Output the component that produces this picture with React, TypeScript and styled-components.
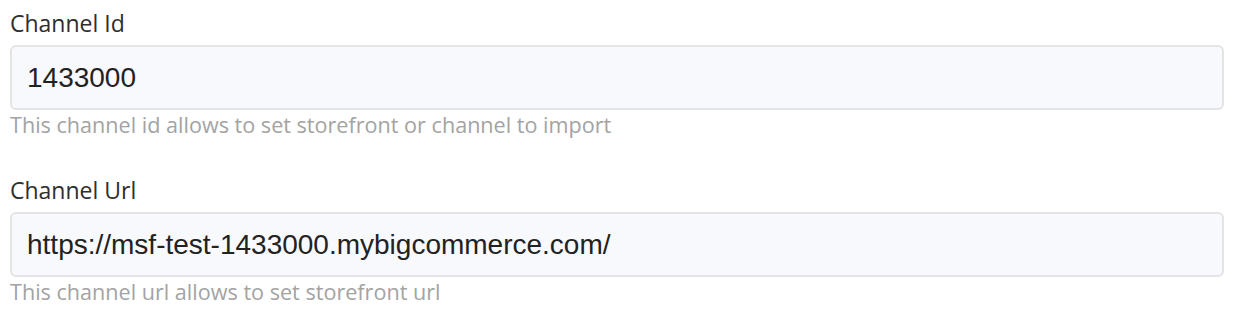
import React from "react";
import styled, { createGlobalStyle } from "styled-components";

const Global = createGlobalStyle`
  html, body {
    margin: 0;
    padding: 0;
    background: #ffffff;
  }
`;

const Page = styled.div`
  display: flex;
  flex-direction: column;
  gap: 35px;
  padding: 7px 14px 0 10px;
`;

const Field = styled.div`
  display: flex;
  flex-direction: column;
`;

const Label = styled.label`
  font-family: "Open Sans", "Noto Sans", sans-serif;
  font-size: 23px;
  font-weight: 500;
  line-height: 32px;
  color: #2e2e2e;
  margin-bottom: 6px;
`;

const Input = styled.input`
  box-sizing: border-box;
  width: 100%;
  height: 65px;
  padding: 0 16px 0 15px;
  margin: 0;
  border: 2px solid #e4e4e4;
  border-radius: 6px;
  background: #f8f9fd;
  font-family: "Liberation Sans", Arial, sans-serif;
  font-size: 28px;
  color: #222222;
  outline: none;
`;

const Help = styled.div`
  font-family: "Open Sans", "Noto Sans", sans-serif;
  font-size: 21.6px;
  line-height: 28px;
  color: #a3a3a3;
  margin-top: 1px;
`;

type FieldProps = { label: string; value: string; help: string };

const FormField = ({ label, value, help }: FieldProps) => (
  <Field>
    <Label>{label}</Label>
    <Input type="text" value={value} readOnly />
    <Help>{help}</Help>
  </Field>
);

export default function App() {
  return (
    <>
      <Global />
      <Page>
        <FormField
          label="Channel Id"
          value="1433000"
          help="This channel id allows to set storefront or channel to import"
        />
        <FormField
          label="Channel Url"
          value="https://msf-test-1433000.mybigcommerce.com/"
          help="This channel url allows to set storefront url"
        />
      </Page>
    </>
  );
}
